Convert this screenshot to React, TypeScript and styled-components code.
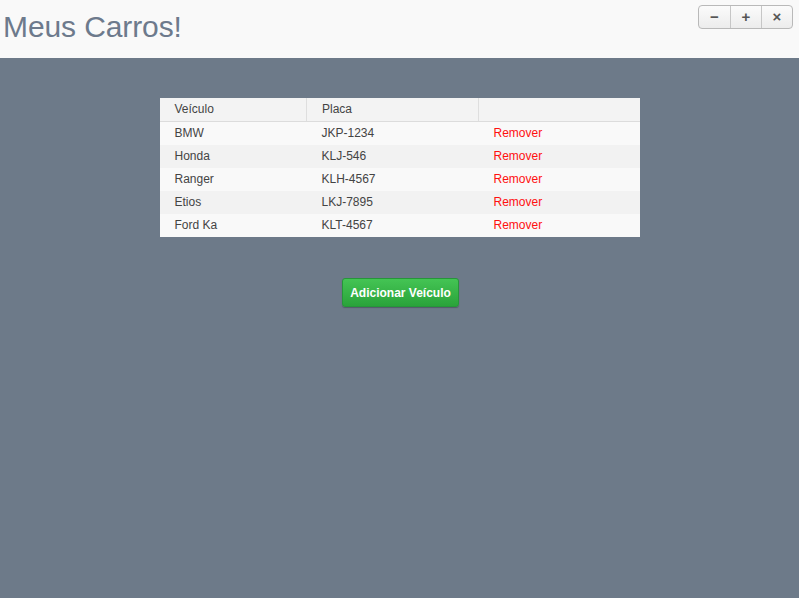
import React from "react";
import styled, { createGlobalStyle } from "styled-components";

const GlobalStyle = createGlobalStyle`
  html, body {
    margin: 0;
    padding: 0;
    height: 100%;
    background: #6d7a89;
    font-family: "Liberation Sans", Arial, sans-serif;
  }
  #root {
    min-height: 100vh;
    display: flex;
    flex-direction: column;
  }
`;

const Header = styled.header`
  height: 58px;
  background: #f9f9f9;
  display: flex;
  align-items: flex-start;
  justify-content: space-between;
  padding: 0 6px 0 3px;
`;

const Title = styled.h1`
  margin: 10px 0 0;
  font-size: 30px;
  font-weight: normal;
  color: #6d7a8c;
  letter-spacing: -0.1px;
`;

const WindowButtons = styled.div`
  display: flex;
  margin-top: 5px;
  border: 1px solid #b9b9b9;
  border-radius: 4px;
  overflow: hidden;
  background: linear-gradient(#fbfbfb, #ececec);
`;

const WinButton = styled.button<{ first?: boolean }>`
  width: 31px;
  height: 22px;
  border: none;
  border-left: ${(p) => (p.first ? "none" : "1px solid #c6c6c6")};
  background: transparent;
  color: #555;
  font-family: "Liberation Sans", Arial, sans-serif;
  font-size: 15px;
  font-weight: bold;
  padding: 0;
  line-height: 22px;
`;

const Main = styled.main`
  flex: 1;
  display: flex;
  flex-direction: column;
  align-items: center;
  padding-top: 40px;
`;

const Table = styled.table`
  width: 480px;
  border-collapse: collapse;
  font-size: 12px;
  color: #444;
  background: #f9f9f9;
`;

const HeadCell = styled.th`
  text-align: left;
  font-weight: normal;
  height: 22px;
  padding: 0 0 1px 15px;
  background: #f3f3f3;
  border-bottom: 1px solid #dcdcdc;
  border-left: 1px solid #dedede;
  &:first-child {
    border-left: none;
  }
`;

const Row = styled.tr<{ striped?: boolean }>`
  background: ${(p) => (p.striped ? "#f2f2f2" : "#f9f9f9")};
`;

const Cell = styled.td`
  height: 22px;
  padding: 0 0 1px 15px;
`;

const RemoveLink = styled.span`
  color: #ff1010;
  cursor: pointer;
`;

const AddButton = styled.button`
  margin: 41px 0 0 2px;
  width: 117px;
  height: 29px;
  border: 1px solid #26963a;
  border-radius: 3px;
  background: linear-gradient(#44c454, #2aa33a);
  color: #fff;
  font-family: "Liberation Sans", Arial, sans-serif;
  font-weight: bold;
  font-size: 12px;
  padding: 1px 0 0;
  box-shadow: 0 1px 1px rgba(0, 0, 0, 0.25);
`;

const cars = [
  { name: "BMW", plate: "JKP-1234" },
  { name: "Honda", plate: "KLJ-546" },
  { name: "Ranger", plate: "KLH-4567" },
  { name: "Etios", plate: "LKJ-7895" },
  { name: "Ford Ka", plate: "KLT-4567" },
];

export default function App() {
  return (
    <>
      <GlobalStyle />
      <Header>
        <Title>Meus Carros!</Title>
        <WindowButtons>
          <WinButton first>−</WinButton>
          <WinButton>+</WinButton>
          <WinButton>×</WinButton>
        </WindowButtons>
      </Header>
      <Main>
        <Table>
          <colgroup>
            <col style={{ width: 147 }} />
            <col style={{ width: 172 }} />
            <col style={{ width: 161 }} />
          </colgroup>
          <thead>
            <tr>
              <HeadCell>Veículo</HeadCell>
              <HeadCell>Placa</HeadCell>
              <HeadCell></HeadCell>
            </tr>
          </thead>
          <tbody>
            {cars.map((car, i) => (
              <Row key={car.plate} striped={i % 2 === 1}>
                <Cell>{car.name}</Cell>
                <Cell>{car.plate}</Cell>
                <Cell>
                  <RemoveLink>Remover</RemoveLink>
                </Cell>
              </Row>
            ))}
          </tbody>
        </Table>
        <AddButton>Adicionar Veículo</AddButton>
      </Main>
    </>
  );
}
